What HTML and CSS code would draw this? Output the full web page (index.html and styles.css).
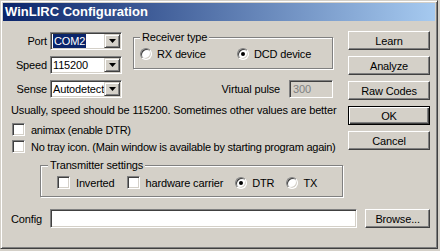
FILE: index.html
```html
<!DOCTYPE html>
<html>
<head>
<meta charset="utf-8">
<link rel="stylesheet" href="styles.css">
</head>
<body>
<div class="window">
  <div class="titlebar">WinLIRC Configuration</div>
  <div class="client">
    <div class="top">
      <div class="main">
        <div class="row1">
          <div class="combos">
            <span class="lbl">Port</span>
            <div class="combo"><span class="val"><span class="sel">COM2</span></span><span class="drop"><svg width="7" height="4" viewBox="0 0 7 4"><polygon points="0,0 7,0 3.5,4" fill="#000"/></svg></span></div>
            <span class="lbl">Speed</span>
            <div class="combo"><span class="val">115200</span><span class="drop"><svg width="7" height="4" viewBox="0 0 7 4"><polygon points="0,0 7,0 3.5,4" fill="#000"/></svg></span></div>
            <span class="lbl">Sense</span>
            <div class="combo"><span class="val">Autodetect</span><span class="drop"><svg width="7" height="4" viewBox="0 0 7 4"><polygon points="0,0 7,0 3.5,4" fill="#000"/></svg></span></div>
          </div>
          <div class="right">
            <fieldset class="group recv">
              <legend>Receiver type</legend>
              <div class="opts">
                <span class="opt opt-rx"><span class="radio"></span>RX device</span>
                <span class="opt"><span class="radio on"></span>DCD device</span>
              </div>
            </fieldset>
            <div class="vpulse"><span class="vlabel">Virtual pulse</span><span class="field disabled">300</span></div>
          </div>
        </div>
        <div class="note">Usually, speed should be 115200. Sometimes other values are better</div>
        <div class="check"><span class="box"></span>animax (enable DTR)</div>
        <div class="check"><span class="box"></span>No tray icon. (Main window is available by starting program again)</div>
        <fieldset class="group tx">
          <legend>Transmitter settings</legend>
          <div class="txopts">
            <span class="opt"><span class="box"></span>Inverted</span>
            <span class="opt"><span class="box"></span>hardware carrier</span>
            <span class="opt"><span class="radio on"></span>DTR</span>
            <span class="opt"><span class="radio"></span>TX</span>
          </div>
        </fieldset>
      </div>
      <div class="buttons">
        <div class="btn">Learn</div>
        <div class="btn">Analyze</div>
        <div class="btn">Raw Codes</div>
        <div class="btn default">OK</div>
        <div class="btn">Cancel</div>
      </div>
    </div>
    <div class="config">
      <span class="clabel">Config</span>
      <span class="field cfg"></span>
      <div class="btn browse">Browse...</div>
    </div>
  </div>
</div>
</body>
</html>
```

FILE: styles.css
```css
* { box-sizing: border-box; }
body {
  margin: 0;
  background: #d4d0c8;
  font-family: "Liberation Sans", Arial, sans-serif;
  font-size: 11px;
  letter-spacing: -0.15px;
  color: #000;
}
.window {
  width: 438px;
  height: 249px;
  border: 1px solid;
  border-color: #d4d0c8 #404040 #404040 #d4d0c8;
  box-shadow: inset 1px 1px #fff, inset -1px -1px #808080;
  padding: 2px;
  background: #d4d0c8;
  display: flex;
  flex-direction: column;
}
.titlebar {
  height: 18px;
  line-height: 18px;
  background: linear-gradient(to right, #0a246a, #a6caf0);
  color: #fff;
  font-weight: bold;
  font-size: 13px;
  letter-spacing: 0;
  padding-left: 2px;
}
.client {
  padding: 10px 5px 0 8px;
}
.top {
  display: flex;
}
.main {
  width: 337px;
}
.row1 {
  display: flex;
}
.combos {
  margin-top: 1px;
  display: grid;
  grid-template-columns: 36px 72px;
  grid-auto-rows: 18px;
  column-gap: 3px;
  row-gap: 6px;
  align-items: center;
}
.lbl {
  text-align: right;
}
.combo {
  height: 18px;
  display: flex;
  align-items: stretch;
  background: #fff;
  border: 1px solid;
  border-color: #808080 #fff #fff #808080;
  box-shadow: inset 1px 1px #404040, inset -1px -1px #d4d0c8;
  padding: 1px;
}
.val {
  flex: 1;
  padding-left: 1px;
  line-height: 14px;
  white-space: nowrap;
  overflow: hidden;
}
.sel {
  background: #0a246a;
  color: #fff;
  padding: 0 1px;
  display: inline-block;
}
.drop {
  width: 16px;
  display: flex;
  align-items: center;
  justify-content: center;
  background: #d4d0c8;
  border: 1px solid;
  border-color: #d4d0c8 #404040 #404040 #d4d0c8;
  box-shadow: inset 1px 1px #fff, inset -1px -1px #808080;
}
.right {
  margin-left: 11px;
  width: 200px;
  display: flex;
  flex-direction: column;
}
.group {
  margin: 0;
  padding: 0;
  min-width: 0;
  border: 1px solid #808080;
  box-shadow: inset 1px 1px #fff, 1px 1px #fff;
}
.group legend {
  padding: 0 2px;
  margin-left: 6px;
  line-height: 13px;
  background: #d4d0c8;
}
.recv {
  height: 38px;
}
.opts {
  display: flex;
  align-items: center;
  padding: 4px 0 0 6px;
}
.opt {
  display: flex;
  align-items: center;
  white-space: nowrap;
}
.opt-rx {
  width: 97px;
}
.radio {
  width: 12px;
  height: 12px;
  border-radius: 50%;
  background: #fff;
  border: 1px solid;
  border-color: #808080 #fff #fff #808080;
  box-shadow: inset 1px 1px #404040, inset -1px -1px #d4d0c8;
  margin-right: 5px;
  display: flex;
  align-items: center;
  justify-content: center;
  flex: none;
}
.radio.on::after {
  content: "";
  width: 4px;
  height: 4px;
  border-radius: 50%;
  background: #000;
}
.box {
  width: 13px;
  height: 13px;
  background: #fff;
  border: 1px solid;
  border-color: #808080 #fff #fff #808080;
  box-shadow: inset 1px 1px #404040, inset -1px -1px #d4d0c8;
  margin-right: 6px;
  flex: none;
}
.vpulse {
  margin-top: 11px;
  display: flex;
  align-items: center;
  justify-content: flex-end;
}
.vlabel {
  margin-right: 9px;
}
.field {
  display: block;
  height: 18px;
  border: 1px solid;
  border-color: #808080 #fff #fff #808080;
  box-shadow: inset 1px 1px #404040, inset -1px -1px #d4d0c8;
  background: #fff;
  padding: 0 3px;
  line-height: 16px;
}
.field.disabled {
  width: 44px;
  background: #d4d0c8;
  color: #808080;
}
.note {
  margin-top: 6px;
  line-height: 13px;
  white-space: nowrap;
}
.check {
  display: flex;
  align-items: center;
  height: 17px;
  margin-left: 1px;
  white-space: nowrap;
  letter-spacing: -0.25px;
}
.note + .check {
  margin-top: 4px;
}
.tx {
  margin: 4px 0 0 29px;
  width: 303px;
  height: 38px;
}
.tx legend {
  margin-left: 7px;
}
.txopts {
  display: flex;
  align-items: center;
  gap: 12px;
  padding: 4px 0 0 16px;
}
.buttons {
  width: 82px;
  display: flex;
  flex-direction: column;
  gap: 6px;
}
.btn {
  height: 19px;
  display: flex;
  align-items: center;
  justify-content: center;
  border: 1px solid;
  border-color: #fff #404040 #404040 #fff;
  box-shadow: inset -1px -1px #808080;
  background: #d4d0c8;
}
.btn.default {
  border: 1px solid #000;
  box-shadow: inset 1px 1px #fff, inset -1px -1px #404040, inset -2px -2px #808080;
}
.config {
  margin-top: 12px;
  display: flex;
  align-items: center;
}
.clabel {
  width: 39px;
}
.field.cfg {
  width: 309px;
  height: 19px;
}
.btn.browse {
  margin-left: 8px;
  width: 65px;
}
```
